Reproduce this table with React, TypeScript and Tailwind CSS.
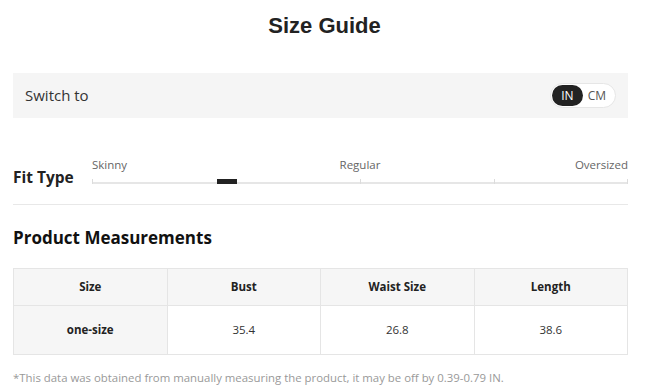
import React, { useState } from 'react';

const fitTicks = ['0%', '50%', '75%', '100%'];

export default function App() {
  const [unit, setUnit] = useState<'IN' | 'CM'>('IN');

  const rows = [{ size: 'one-size', bust: '35.4', waist: '26.8', length: '38.6' }];

  return (
    <div className="w-[649px] h-[389px] bg-white text-[#222]" style={{ fontFamily: '"Open Sans", "Noto Sans", sans-serif' }}>
      <h2
        className="pt-[9px] h-[73px] text-center text-[22px] font-bold text-[#222]"
        style={{ fontFamily: '"Liberation Sans", Arial, sans-serif' }}
      >
        Size Guide
      </h2>

      <div className="pl-[13px] pr-[21px]">
        {/* unit switcher */}
        <div className="flex items-center justify-between h-[45px] bg-[#f5f5f5] pl-[12px] pr-[12px]">
          <span className="text-[15px] text-[#333]">Switch to</span>
          <div className="flex items-center h-[25px] rounded-full border border-[#e6e6e6] bg-white p-[1px]">
            {(['IN', 'CM'] as const).map((u) => (
              <button
                key={u}
                onClick={() => setUnit(u)}
                className={
                  unit === u
                    ? 'h-[21px] px-[9px] rounded-full bg-[#222] text-white text-[12px] leading-none'
                    : 'h-[21px] pl-[5px] pr-[8px] rounded-full text-[#555] text-[12px] leading-none'
                }
              >
                {u}
              </button>
            ))}
          </div>
        </div>

        {/* fit type */}
        <div className="flex items-end pt-[41px] pb-[20px] border-b border-[#e8e8e8]">
          <div className="w-[79px] text-[15.5px] font-bold leading-none mb-[-2px]">Fit Type</div>
          <div className="flex-1">
            <div className="grid grid-cols-3 text-[11.5px] text-[#666] leading-none pb-[9px]">
              <span>Skinny</span>
              <span className="text-center">Regular</span>
              <span className="text-right">Oversized</span>
            </div>
            <div className="relative h-[4px]">
              <div className="absolute left-0 right-0 top-[2px] h-[2px] bg-[#e6e6e6]" />
              {fitTicks.map((t) => (
                <div key={t} className="absolute top-[-1px] h-[5px] w-[1px] bg-[#dcdcdc]" style={{ left: `calc(${t} - ${t === '100%' ? 1 : 0}px)` }} />
              ))}
              <div className="absolute left-[125px] top-[-1px] h-[5px] w-[20px] bg-[#222]" />
            </div>
          </div>
        </div>

        {/* measurements */}
        <h3 className="pt-[24px] text-[17px] font-bold leading-none text-[#111]">Product Measurements</h3>

        <table className="mt-[22px] w-full border-collapse text-[11.5px] text-center">
          <thead>
            <tr className="h-[37px] bg-[#f6f6f6]">
              {['Size', 'Bust', 'Waist Size', 'Length'].map((h) => (
                <th key={h} className="w-1/4 border border-[#e5e5e5] font-bold text-[#222]">{h}</th>
              ))}
            </tr>
          </thead>
          <tbody>
            {rows.map((r) => (
              <tr key={r.size} className="h-[49px]">
                <td className="border border-[#e5e5e5] bg-[#f6f6f6] font-bold">{r.size}</td>
                <td className="border border-[#e5e5e5] text-[#333]">{r.bust}</td>
                <td className="border border-[#e5e5e5] text-[#333]">{r.waist}</td>
                <td className="border border-[#e5e5e5] text-[#333]">{r.length}</td>
              </tr>
            ))}
          </tbody>
        </table>

        <p className="pt-[17px] text-[11.4px] text-[#999] leading-none">
          *This data was obtained from manually measuring the product, it may be off by 0.39-0.79 IN.
        </p>
      </div>
    </div>
  );
}
